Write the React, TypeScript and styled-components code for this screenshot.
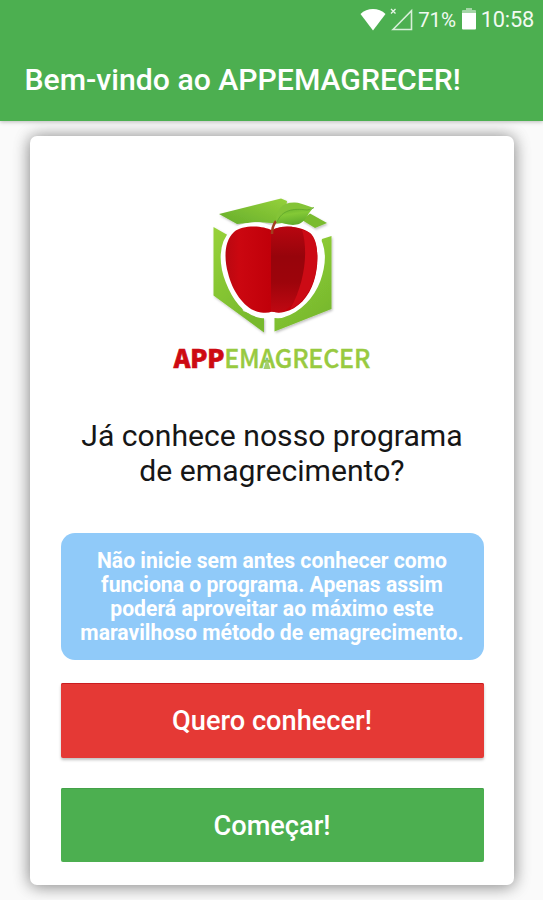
import React from "react";
import styled, { createGlobalStyle } from "styled-components";

const GlobalStyle = createGlobalStyle`
  * { box-sizing: border-box; }
  body { margin: 0; background: #fafafa; font-family: Roboto, sans-serif; }
`;

const Screen = styled.div`
  width: 543px;
  height: 900px;
  overflow: hidden;
  background: #fafafa;
  display: flex;
  flex-direction: column;
`;

const Header = styled.header`
  flex: none;
  height: 121px;
  background: #4caf50;
  color: #fff;
  z-index: 1;
  box-shadow: 0 1px 4px rgba(0, 0, 0, 0.25);
`;

const StatusBar = styled.div`
  height: 38px;
  padding: 1px 9px 0 0;
  display: flex;
  align-items: center;
  justify-content: flex-end;
`;

const StatusText = styled.span<{ $size: number; $left: number; $spacing: number }>`
  font-size: ${(p) => p.$size}px;
  line-height: 38px;
  margin-left: ${(p) => p.$left}px;
  letter-spacing: ${(p) => p.$spacing}px;
  color: #f1faf1;
`;

const StatusIcon = styled.svg<{ $left?: number }>`
  display: block;
  flex: none;
  margin: 0 0 1px ${(p) => p.$left ?? 0}px;
`;

const Title = styled.h1`
  margin: 0;
  padding-left: 24.5px;
  font-size: 30.2px;
  line-height: 84px;
  font-weight: 500;
  white-space: nowrap;
`;

const Card = styled.main`
  flex: none;
  width: 484px;
  height: 749px;
  margin: 15px 0 0 30px;
  padding: 54px 30.5px 0;
  border-radius: 7px;
  background: #fff;
  box-shadow: 0 0 16px rgba(0, 0, 0, 0.26), 0 2px 17px rgba(0, 0, 0, 0.28);
  display: flex;
  flex-direction: column;
  align-items: center;
`;

const Emblem = styled.svg`
  display: block;
  flex: none;
`;

const Wordmark = styled.div`
  height: 32px;
  margin-top: 1px;
  display: flex;
  font-family: "Noto Sans CJK SC", "Noto Sans", sans-serif;
  font-size: 25px;
  line-height: 32px;
  white-space: nowrap;
`;

const WordPart = styled.span<{ $tone: string; $weight: number; $spacing: number; $stroke: number }>`
  color: ${(p) => p.$tone};
  font-weight: ${(p) => p.$weight};
  letter-spacing: ${(p) => p.$spacing}px;
  -webkit-text-stroke: ${(p) => p.$stroke}px ${(p) => p.$tone};
`;

const FigureLetter = styled.span`
  position: relative;
`;

const Figure = styled.svg`
  position: absolute;
  left: 3px;
  bottom: 6px;
  width: 10px;
  height: 13px;
`;

const Question = styled.h2`
  margin: 46px 0 0;
  font-size: 30.15px;
  line-height: 34.5px;
  font-weight: 400;
  color: #161616;
  text-align: center;
  white-space: nowrap;
`;

const Notice = styled.p`
  flex: none;
  width: 423px;
  height: 127px;
  margin: 45px 0 0;
  padding: 15.5px 0;
  border-radius: 14px;
  background: #90caf9;
  color: #fff;
  font-size: 21.15px;
  line-height: 24.2px;
  font-weight: 700;
  text-align: center;
  white-space: nowrap;
`;

const Button = styled.button<{ $color: string; $edge: string; $height: number; $top: number; $raised?: boolean }>`
  flex: none;
  width: 423px;
  height: ${(p) => p.$height}px;
  margin: ${(p) => p.$top}px 0 0;
  padding: ${(p) => (p.$raised ? 0 : 2)}px 0 0;
  border: 0;
  border-radius: 2px;
  background: ${(p) => p.$color};
  box-shadow: inset 0 1px 0 ${(p) => p.$edge}${(p) => (p.$raised ? ", 0 2px 3px rgba(0, 0, 0, 0.25)" : "")};
  color: #fff;
  font-family: Roboto, sans-serif;
  font-size: 27.2px;
  font-weight: 500;
`;

function WifiIcon() {
  return (
    <StatusIcon width="26" height="23" viewBox="0 0 26 23">
      <path d="M.5 6C7 -.8 19 -.8 25.500 6L13 22.500Z" fill="#fff" />
    </StatusIcon>
  );
}

function SignalIcon() {
  return (
    <StatusIcon $left={4} width="24" height="24" viewBox="0 0 24 24">
      <path d="M3 22.500L21.500 3.800V22.500Z" fill="none" stroke="#d8efd9" strokeWidth="1.600" />
      <path d="M1 2L5.500 6.500M5.500 2L1 6.500" stroke="#e8f6e8" strokeWidth="1.300" />
    </StatusIcon>
  );
}

function BatteryIcon() {
  return (
    <StatusIcon $left={6} width="14" height="22" viewBox="0 0 14 22">
      <path d="M4 0H10V2H13Q14 2 14 3V6H0V3Q0 2 1 2H4Z" fill="#a5d6a7" />
      <path d="M0 5H14V20.500Q14 21.500 13 21.500H1Q0 21.500 0 20.500Z" fill="#fff" />
    </StatusIcon>
  );
}

function AppleEmblem() {
  return (
    <Emblem width="135" height="150" viewBox="205 190 135 150">
      <defs>
        <linearGradient id="frame" x1="0" y1="0" x2="0.5" y2="1">
          <stop offset="0" stopColor="#98d23a" />
          <stop offset="0.6" stopColor="#84c431" />
          <stop offset="1" stopColor="#78b92e" />
        </linearGradient>
        <linearGradient id="top" x1="0" y1="1" x2="1" y2="0">
          <stop offset="0" stopColor="#65ad2b" />
          <stop offset="1" stopColor="#95d13a" />
        </linearGradient>
        <linearGradient id="leaf" x1="0" y1="0" x2="0.3" y2="1">
          <stop offset="0" stopColor="#62ad2b" />
          <stop offset="0.45" stopColor="#84c936" />
          <stop offset="1" stopColor="#60ac2b" />
        </linearGradient>
        <linearGradient id="skin" x1="0" y1="0" x2="1" y2="0">
          <stop offset="0" stopColor="#b90811" />
          <stop offset="0.15" stopColor="#cb0710" />
          <stop offset="0.48" stopColor="#c1000a" />
        </linearGradient>
        <linearGradient id="shade" x1="0" y1="0" x2="0" y2="1">
          <stop offset="0" stopColor="#b80610" />
          <stop offset="0.35" stopColor="#97040b" />
          <stop offset="0.65" stopColor="#9d040b" />
          <stop offset="1" stopColor="#c00812" />
        </linearGradient>
        <filter id="lift" x="-10%" y="-10%" width="120%" height="120%">
          <feDropShadow dx="1" dy="1.500" stdDeviation="1" floodOpacity="0.25" />
        </filter>
      </defs>
      <g filter="url(#lift)">
        <path d="M219 214L281 198.500L287 201L284 224L258 222L237 224Z" fill="url(#top)" />
        <path d="M310 213.500L327 223L315 228L302 220Z" fill="#7abb2e" />
        <path d="M213.500 227L227.500 235L243 311L264 318V332.500L213.500 295.500Z" fill="url(#frame)" />
        <path d="M331.500 236V309L274.500 331.500V318L310 292L322 239Z" fill="url(#frame)" />
      </g>
      <path
        d="M271 230C262 224 243 224 233 233C222 244 222 263 229 281C236 299 247 312 261 314.500Q268 315.500 272 313.500Q278 316 284 313.500C298 309 311 296 317 280C324 260 322 244 313 234C303 224 282 224 271 230Z"
        fill="#fff" stroke="#fff" strokeWidth="7"
      />
      <path
        d="M272 230.500C263 225.500 243 224.500 234 232C224 241 224 259 228 273C233 294 247 311 261 312.500Q268 313.500 272 311.500Q278 313.500 284 312C298 309 309 297 314 281C319 264 319 245 311 234C302 226 282 224.500 272 230.500Z"
        fill="url(#skin)"
      />
      <path d="M271 230.500C281 224.500 296 225.500 304 231C308 250 308 281 296 300Q290 307 284 311.500Q277 313 271 311.500Z" fill="url(#shade)" />
      <path d="M302 230C308 249 306 281 290 309.500C304 303 312 288 315 276C319 258 318 239 310 233Q307 231 302 230Z" fill="#cc0b15" />
      <path d="M272 234C272 229 273 225 276 221" fill="none" stroke="#a33e1e" strokeWidth="2.500" />
      <path d="M276 222C276 210 282 202 295 202.500C303 203 308 207 314 207.500L307 211Z" fill="#84c437" />
      <path d="M277 222C282 210 293 208 307 210Q311 210 314 207.500C308 212 307 220 300 223.500C292 227 284 223 277 222Z" fill="url(#leaf)" />
      <path d="M277 222C282 210 293 208 307 210Q311 210 314 207.500" fill="none" stroke="#5ea62a" strokeWidth="0.8" />
    </Emblem>
  );
}

export default function App() {
  return (
    <>
      <GlobalStyle />
      <Screen>
        <Header>
          <StatusBar>
            <WifiIcon />
            <SignalIcon />
            <StatusText $size={20.5} $left={4} $spacing={-0.2}>71%</StatusText>
            <BatteryIcon />
            <StatusText $size={21.8} $left={5} $spacing={-0.2}>10:58</StatusText>
          </StatusBar>
          <Title>Bem-vindo ao APPEMAGRECER!</Title>
        </Header>
        <Card>
          <AppleEmblem />
          <Wordmark>
            <WordPart $tone="#cd0a12" $weight={900} $spacing={-0.2} $stroke={0.7}>APP</WordPart>
            <WordPart $tone="#98ca40" $weight={500} $spacing={-0.2} $stroke={0.4}>
              EM
              <FigureLetter>
                A
                <Figure viewBox="0 0 10 13">
                  <circle cx="5" cy="3" r="1.5" fill="#82c39a" />
                  <path d="M4 5H6L8.500 13H1.500Z" fill="#a5cf70" />
                </Figure>
              </FigureLetter>
              GRECER
            </WordPart>
          </Wordmark>
          <Question>
            Já conhece nosso programa<br />de emagrecimento?
          </Question>
          <Notice>
            Não inicie sem antes conhecer como<br />
            funciona o programa. Apenas assim<br />
            poderá aproveitar ao máximo este<br />
            maravilhoso método de emagrecimento.
          </Notice>
          <Button $color="#e53935" $edge="#c91c20" $height={75} $top={23} $raised>Quero conhecer!</Button>
          <Button $color="#4caf50" $edge="#43a148" $height={74} $top={30}>Começar!</Button>
        </Card>
      </Screen>
    </>
  );
}
